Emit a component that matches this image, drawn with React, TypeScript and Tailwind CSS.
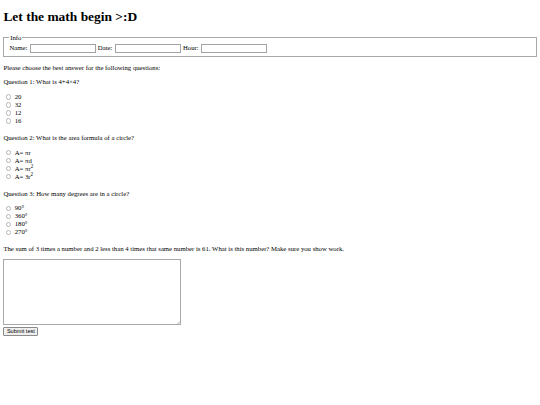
import React from 'react'

const questions = [
  {
    text: 'Question 1: What is 4+4×4?',
    name: 'q1',
    answers: [<>20</>, <>32</>, <>12</>, <>16</>],
    after: 'pb-[2.5px]',
  },
  {
    text: 'Question 2: What is the area formula of a circle?',
    name: 'q2',
    answers: [
      <>A= πr</>,
      <>A= πd</>,
      <>
        A= πr<sup>2</sup>
      </>,
      <>
        A= 3r<sup>2</sup>
      </>,
    ],
    after: 'pb-[2.5px]',
  },
  {
    text: 'Question 3: How many degrees are in a circle?',
    name: 'q3',
    answers: [<>90°</>, <>360°</>, <>180°</>, <>270°</>],
    after: 'pb-[1.6px]',
  },
]

function TextBox() {
  return (
    <input
      type="text"
      className="inline-block w-[66px] h-[9px] mx-[0.6px] align-middle border border-[#a3a3a3] bg-white"
    />
  )
}

export default function App() {
  return (
    <div className="w-[540px] min-h-[405px] bg-white text-black px-[3.4px] pt-[9px] font-['Liberation_Serif',serif] text-[6.72px] leading-[7.76px]">
      <h1 className="text-[13.44px] leading-[15.5px] font-bold mb-[9px]">Let the math begin &gt;:D</h1>

      <form onSubmit={(e) => e.preventDefault()}>
        <fieldset className="border border-[#a9a9a9] px-[5px] pt-[1.6px] pb-[3.4px]">
          <legend className="px-[0.84px]">Info</legend>
          <div className="leading-[10px]">
            Name: <TextBox /> Date: <TextBox /> Hour: <TextBox />
          </div>
        </fieldset>

        <p className="my-[6.72px]">Please choose the best answer for the following questions:</p>

        {questions.map((q) => (
          <div key={q.name}>
            <p className="my-[6.72px]">{q.text}</p>
            <div className={q.after}>
              {q.answers.map((a, i) => (
                <label key={i} className="flex items-center h-[8px]">
                  <input
                    type="radio"
                    name={q.name}
                    className="appearance-none w-[5.5px] h-[5.5px] ml-[2.6px] mr-[3.2px] rounded-full border border-[#b8b8b8] bg-white"
                  />
                  <span>{a}</span>
                </label>
              ))}
            </div>
          </div>
        ))}

        <p className="my-[6.72px]">
          The sum of 3 times a number and 2 less than 4 times that same number is 61. What is this number? Make sure you
          show work.
        </p>

        <div className="relative w-[177.5px] h-[66px]">
          <textarea className="block w-full h-full resize-none border border-[#a9a9a9] bg-white" />
          <svg className="absolute right-[1px] bottom-[1px] w-[3px] h-[3px]" viewBox="0 0 3 3">
            <path d="M3 0L0 3M3 1.5L1.5 3" stroke="#999" strokeWidth="0.5" />
          </svg>
        </div>

        <button
          type="submit"
          className="block mt-[1.8px] h-[8.6px] px-[2.5px] bg-[#efefef] border border-[#8a8a8a] rounded-[1px] font-['Liberation_Sans',sans-serif] text-[5.6px] leading-[6px]"
        >
          Submit test
        </button>
      </form>
    </div>
  )
}
